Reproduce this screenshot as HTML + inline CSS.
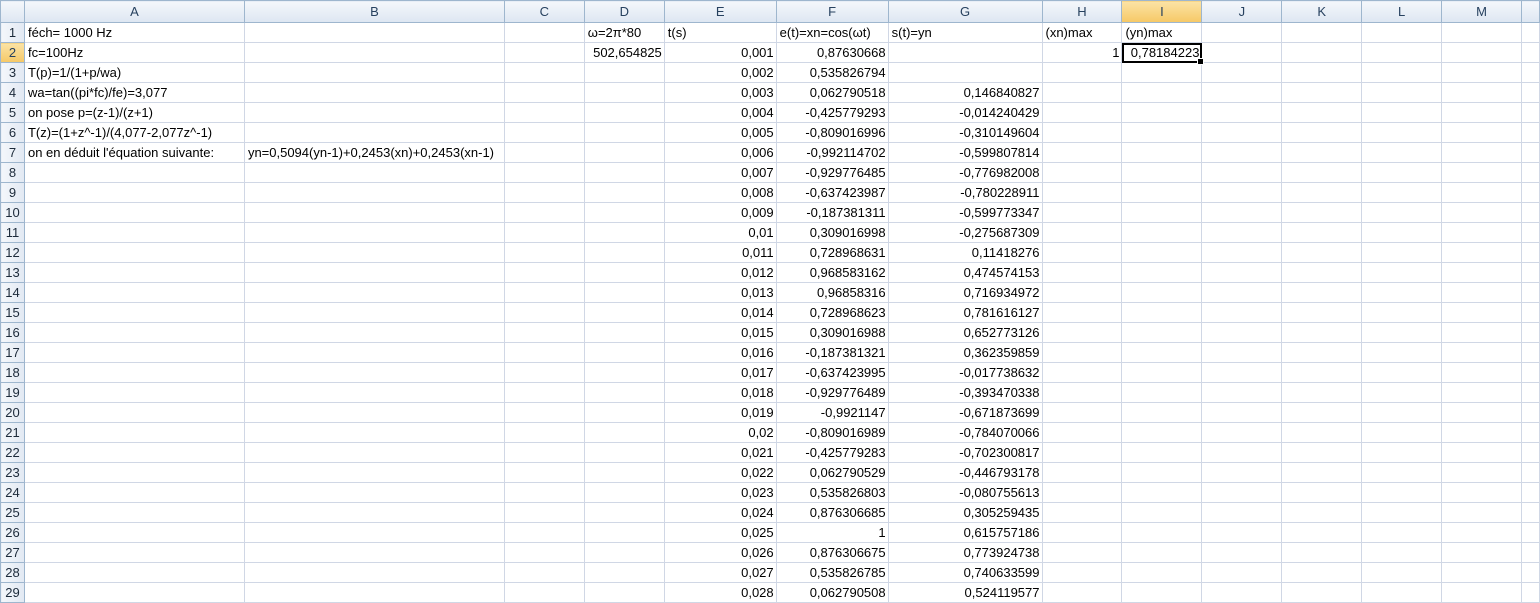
<!DOCTYPE html>
<html><head><meta charset="utf-8"><style>
body{margin:0;width:1540px;height:596px;overflow:hidden;background:#fff;font-family:"Liberation Sans",sans-serif;font-size:13px;color:#000}
table{border-collapse:collapse;table-layout:fixed;position:absolute;left:0;top:0}
td{border:1px solid #d0d7e5;height:19px;padding:0 2px 0 3px;white-space:nowrap;overflow:visible;line-height:19px}
tr.h td{height:21px;background:linear-gradient(#f4f7fb,#dde6f2);border-color:#9eb6ce;text-align:center;color:#27415f;padding:0}
td.r{background:linear-gradient(90deg,#f4f7fb,#e2e9f3);border-color:#9eb6ce;text-align:center;color:#1c2a3a;padding:0}
td.sel{background:linear-gradient(#fbe3a6,#f6c866)!important;color:#27415f}
.n{text-align:right}
</style></head><body>
<table>
<colgroup><col style="width:24px"><col style="width:220px"><col style="width:260px"><col style="width:80px"><col style="width:80px"><col style="width:112px"><col style="width:112px"><col style="width:154px"><col style="width:80px"><col style="width:80px"><col style="width:80px"><col style="width:80px"><col style="width:80px"><col style="width:80px"><col style="width:18px"></colgroup>
<tr class="h"><td></td><td>A</td><td>B</td><td>C</td><td>D</td><td>E</td><td>F</td><td>G</td><td>H</td><td class="sel">I</td><td>J</td><td>K</td><td>L</td><td>M</td><td></td></tr>
<tr><td class="r">1</td><td>féch= 1000 Hz</td><td></td><td></td><td>ω=2π*80</td><td>t(s)</td><td>e(t)=xn=cos(ωt)</td><td>s(t)=yn</td><td>(xn)max</td><td>(yn)max</td><td></td><td></td><td></td><td></td><td></td></tr>
<tr><td class="r sel">2</td><td>fc=100Hz</td><td></td><td></td><td class="n">502,654825</td><td class="n">0,001</td><td class="n">0,87630668</td><td></td><td class="n">1</td><td class="n" style="outline:2px solid #000;outline-offset:-2px;position:relative">0,78184223<span style="position:absolute;right:-3px;bottom:-3px;width:5px;height:5px;background:#000;border:1px solid #fff"></span></td><td></td><td></td><td></td><td></td><td></td></tr>
<tr><td class="r">3</td><td>T(p)=1/(1+p/wa)</td><td></td><td></td><td></td><td class="n">0,002</td><td class="n">0,535826794</td><td></td><td></td><td></td><td></td><td></td><td></td><td></td><td></td></tr>
<tr><td class="r">4</td><td>wa=tan((pi*fc)/fe)=3,077</td><td></td><td></td><td></td><td class="n">0,003</td><td class="n">0,062790518</td><td class="n">0,146840827</td><td></td><td></td><td></td><td></td><td></td><td></td><td></td></tr>
<tr><td class="r">5</td><td>on pose p=(z-1)/(z+1)</td><td></td><td></td><td></td><td class="n">0,004</td><td class="n">-0,425779293</td><td class="n">-0,014240429</td><td></td><td></td><td></td><td></td><td></td><td></td><td></td></tr>
<tr><td class="r">6</td><td>T(z)=(1+z^-1)/(4,077-2,077z^-1)</td><td></td><td></td><td></td><td class="n">0,005</td><td class="n">-0,809016996</td><td class="n">-0,310149604</td><td></td><td></td><td></td><td></td><td></td><td></td><td></td></tr>
<tr><td class="r">7</td><td>on en déduit l'équation suivante:</td><td>yn=0,5094(yn-1)+0,2453(xn)+0,2453(xn-1)</td><td></td><td></td><td class="n">0,006</td><td class="n">-0,992114702</td><td class="n">-0,599807814</td><td></td><td></td><td></td><td></td><td></td><td></td><td></td></tr>
<tr><td class="r">8</td><td></td><td></td><td></td><td></td><td class="n">0,007</td><td class="n">-0,929776485</td><td class="n">-0,776982008</td><td></td><td></td><td></td><td></td><td></td><td></td><td></td></tr>
<tr><td class="r">9</td><td></td><td></td><td></td><td></td><td class="n">0,008</td><td class="n">-0,637423987</td><td class="n">-0,780228911</td><td></td><td></td><td></td><td></td><td></td><td></td><td></td></tr>
<tr><td class="r">10</td><td></td><td></td><td></td><td></td><td class="n">0,009</td><td class="n">-0,187381311</td><td class="n">-0,599773347</td><td></td><td></td><td></td><td></td><td></td><td></td><td></td></tr>
<tr><td class="r">11</td><td></td><td></td><td></td><td></td><td class="n">0,01</td><td class="n">0,309016998</td><td class="n">-0,275687309</td><td></td><td></td><td></td><td></td><td></td><td></td><td></td></tr>
<tr><td class="r">12</td><td></td><td></td><td></td><td></td><td class="n">0,011</td><td class="n">0,728968631</td><td class="n">0,11418276</td><td></td><td></td><td></td><td></td><td></td><td></td><td></td></tr>
<tr><td class="r">13</td><td></td><td></td><td></td><td></td><td class="n">0,012</td><td class="n">0,968583162</td><td class="n">0,474574153</td><td></td><td></td><td></td><td></td><td></td><td></td><td></td></tr>
<tr><td class="r">14</td><td></td><td></td><td></td><td></td><td class="n">0,013</td><td class="n">0,96858316</td><td class="n">0,716934972</td><td></td><td></td><td></td><td></td><td></td><td></td><td></td></tr>
<tr><td class="r">15</td><td></td><td></td><td></td><td></td><td class="n">0,014</td><td class="n">0,728968623</td><td class="n">0,781616127</td><td></td><td></td><td></td><td></td><td></td><td></td><td></td></tr>
<tr><td class="r">16</td><td></td><td></td><td></td><td></td><td class="n">0,015</td><td class="n">0,309016988</td><td class="n">0,652773126</td><td></td><td></td><td></td><td></td><td></td><td></td><td></td></tr>
<tr><td class="r">17</td><td></td><td></td><td></td><td></td><td class="n">0,016</td><td class="n">-0,187381321</td><td class="n">0,362359859</td><td></td><td></td><td></td><td></td><td></td><td></td><td></td></tr>
<tr><td class="r">18</td><td></td><td></td><td></td><td></td><td class="n">0,017</td><td class="n">-0,637423995</td><td class="n">-0,017738632</td><td></td><td></td><td></td><td></td><td></td><td></td><td></td></tr>
<tr><td class="r">19</td><td></td><td></td><td></td><td></td><td class="n">0,018</td><td class="n">-0,929776489</td><td class="n">-0,393470338</td><td></td><td></td><td></td><td></td><td></td><td></td><td></td></tr>
<tr><td class="r">20</td><td></td><td></td><td></td><td></td><td class="n">0,019</td><td class="n">-0,9921147</td><td class="n">-0,671873699</td><td></td><td></td><td></td><td></td><td></td><td></td><td></td></tr>
<tr><td class="r">21</td><td></td><td></td><td></td><td></td><td class="n">0,02</td><td class="n">-0,809016989</td><td class="n">-0,784070066</td><td></td><td></td><td></td><td></td><td></td><td></td><td></td></tr>
<tr><td class="r">22</td><td></td><td></td><td></td><td></td><td class="n">0,021</td><td class="n">-0,425779283</td><td class="n">-0,702300817</td><td></td><td></td><td></td><td></td><td></td><td></td><td></td></tr>
<tr><td class="r">23</td><td></td><td></td><td></td><td></td><td class="n">0,022</td><td class="n">0,062790529</td><td class="n">-0,446793178</td><td></td><td></td><td></td><td></td><td></td><td></td><td></td></tr>
<tr><td class="r">24</td><td></td><td></td><td></td><td></td><td class="n">0,023</td><td class="n">0,535826803</td><td class="n">-0,080755613</td><td></td><td></td><td></td><td></td><td></td><td></td><td></td></tr>
<tr><td class="r">25</td><td></td><td></td><td></td><td></td><td class="n">0,024</td><td class="n">0,876306685</td><td class="n">0,305259435</td><td></td><td></td><td></td><td></td><td></td><td></td><td></td></tr>
<tr><td class="r">26</td><td></td><td></td><td></td><td></td><td class="n">0,025</td><td class="n">1</td><td class="n">0,615757186</td><td></td><td></td><td></td><td></td><td></td><td></td><td></td></tr>
<tr><td class="r">27</td><td></td><td></td><td></td><td></td><td class="n">0,026</td><td class="n">0,876306675</td><td class="n">0,773924738</td><td></td><td></td><td></td><td></td><td></td><td></td><td></td></tr>
<tr><td class="r">28</td><td></td><td></td><td></td><td></td><td class="n">0,027</td><td class="n">0,535826785</td><td class="n">0,740633599</td><td></td><td></td><td></td><td></td><td></td><td></td><td></td></tr>
<tr><td class="r">29</td><td></td><td></td><td></td><td></td><td class="n">0,028</td><td class="n">0,062790508</td><td class="n">0,524119577</td><td></td><td></td><td></td><td></td><td></td><td></td><td></td></tr>
</table>
</body></html>
